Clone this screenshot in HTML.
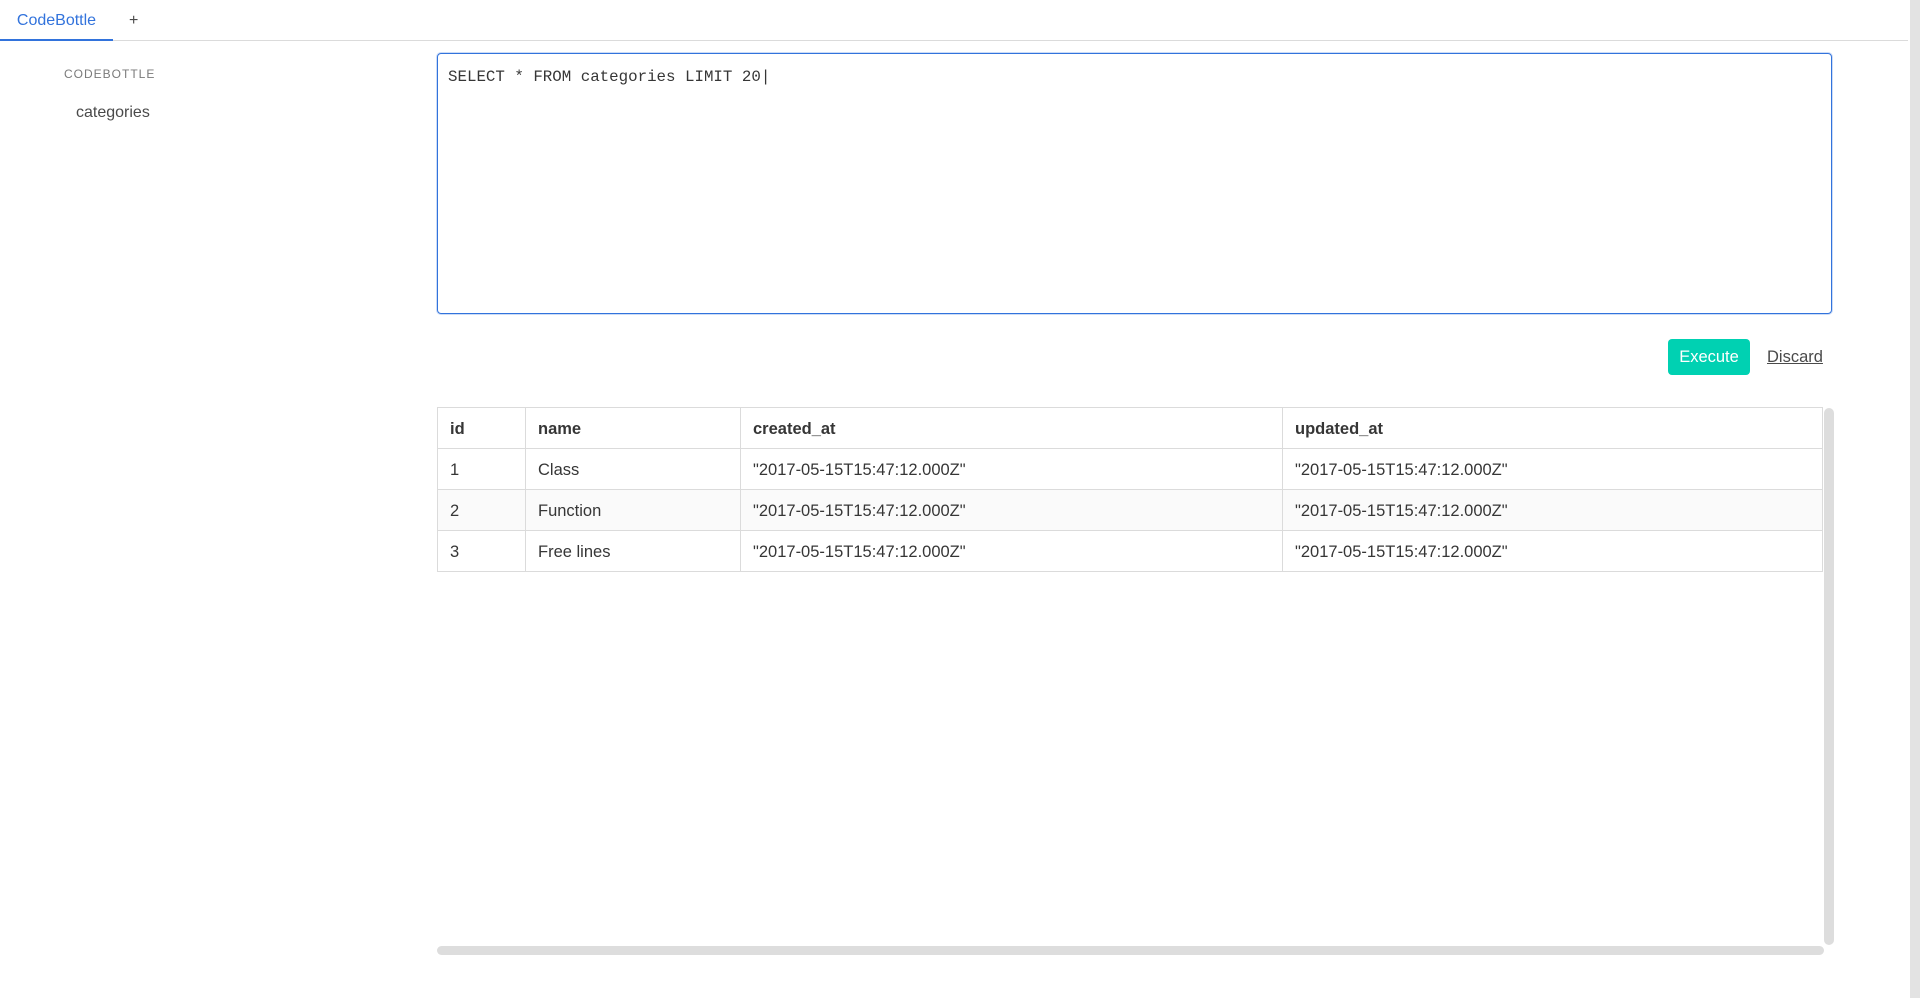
<!DOCTYPE html>
<html><head><style>
body{margin:0;width:1920px;height:998px;overflow:hidden;background:#fff;font-family:"Liberation Sans",sans-serif;color:#363636;position:relative}
.tabs{position:absolute;left:0;top:0;width:1908px;height:40px;border-bottom:1px solid #dbdbdb}
.tab{position:absolute;left:0;top:0;width:113px;height:39px;border-bottom:2px solid #3273dc;color:#3273dc;font-size:16px;line-height:42px;text-align:center}
.plus{position:absolute;left:129px;top:0;line-height:42px;font-size:16px;color:#4a4a4a}
.lbl{position:absolute;left:64px;top:67px;font-size:12px;letter-spacing:1px;color:#7a7a7a}
.cat{position:absolute;left:76px;top:104px;font-size:16px;color:#4a4a4a}
.ta{position:absolute;left:437px;top:53px;width:1393px;height:259px;border:1.5px solid #3273dc;border-radius:4px;box-shadow:0 0 0 1px rgba(50,115,220,.25)}
.ta span{position:absolute;left:10px;top:14px;font-family:"Liberation Mono",monospace;font-size:15.8px;color:#363636}
.btn{position:absolute;left:1668px;top:339px;width:82px;height:36px;background:#00d1b2;border-radius:4px;color:#fff;font-size:16.5px;line-height:37px;text-align:center}
.dis{position:absolute;left:1767px;top:339px;line-height:37px;font-size:16.5px;color:#4a4a4a;text-decoration:underline}
table{position:absolute;left:437px;top:407px;width:1386px;border-collapse:collapse;font-size:16.5px}
td,th{border:1px solid #dbdbdb;height:37px;padding:3px 12px 0;text-align:left;color:#363636;box-sizing:content-box}
th{font-weight:bold}
.vs{position:absolute;left:1824px;top:408px;width:10px;height:537px;background:#ddd;border-radius:5px}
.hs{position:absolute;left:437px;top:946px;width:1387px;height:9px;background:#ddd;border-radius:5px}
.ps{position:absolute;left:1910px;top:0;width:10px;height:998px;background:#e3e3e3}
</style></head><body>
<div class="tabs"><div class="tab">CodeBottle</div><div class="plus">+</div></div>
<div class="lbl">CODEBOTTLE</div>
<div class="cat">categories</div>
<div class="ta"><span>SELECT * FROM categories LIMIT 20|</span></div>
<div class="btn">Execute</div>
<div class="dis">Discard</div>
<table>
<tr><th style="width:63px">id</th><th style="width:190px">name</th><th style="width:517px">created_at</th><th>updated_at</th></tr>
<tr><td>1</td><td>Class</td><td>"2017-05-15T15:47:12.000Z"</td><td>"2017-05-15T15:47:12.000Z"</td></tr>
<tr><td style="background:#fafafa">2</td><td style="background:#fafafa">Function</td><td style="background:#fafafa">"2017-05-15T15:47:12.000Z"</td><td style="background:#fafafa">"2017-05-15T15:47:12.000Z"</td></tr>
<tr><td>3</td><td>Free lines</td><td>"2017-05-15T15:47:12.000Z"</td><td>"2017-05-15T15:47:12.000Z"</td></tr>
</table>
<div class="vs"></div><div class="hs"></div><div class="ps"></div>
</body></html>
